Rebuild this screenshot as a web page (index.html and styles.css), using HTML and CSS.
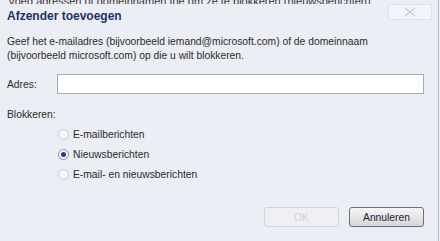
FILE: index.html
```html
<!DOCTYPE html>
<html lang="nl">
<head>
    <meta charset="UTF-8">
    <title>Afzender toevoegen</title>
    <link rel="stylesheet" href="styles.css">
</head>
<body>
    <div class="dialog">
        <div class="behind-text">Voeg adressen of domeinnamen toe om ze te blokkeren (nieuwsberichten)</div>
        <div class="title-bar">
            <div class="title">Afzender toevoegen</div>
            <div class="close-btn">
                <svg width="14" height="10" viewBox="0 0 14 10">
                    <path d="M2 1 L12 9 M12 1 L2 9" stroke="#c8cbe0" stroke-width="1.5" fill="none"/>
                </svg>
            </div>
        </div>

        <div class="content">
            <p class="intro">Geef het e-mailadres (bijvoorbeeld iemand@microsoft.com) of de domeinnaam (bijvoorbeeld microsoft.com) op die u wilt blokkeren.</p>

            <div class="field">
                <label class="field-label">Adres:</label>
                <div class="text-input"></div>
            </div>

            <div class="block-label">Blokkeren:</div>
            <div class="radio-list">
                <div class="radio-item">
                    <span class="radio"></span>
                    <span>E-mailberichten</span>
                </div>
                <div class="radio-item">
                    <span class="radio checked"></span>
                    <span>Nieuwsberichten</span>
                </div>
                <div class="radio-item">
                    <span class="radio"></span>
                    <span>E-mail- en nieuwsberichten</span>
                </div>
            </div>

            <div class="buttons">
                <div class="btn disabled">OK</div>
                <div class="btn">Annuleren</div>
            </div>
        </div>
    </div>
</body>
</html>
```

FILE: styles.css
```css
:root {
    --bg: #eceef6;
    --text: #2b2b2b;
    --title: #1c3466;
    --edge: #b9bdd6;
}

body {
    margin: 0;
    background: var(--bg);
    font-family: 'Liberation Sans', Arial, sans-serif;
    font-size: 10.3px;
    color: var(--text);
}

.dialog {
    width: 438px;
    height: 241px;
    border-right: 1px solid var(--edge);
    overflow: hidden;
    display: flex;
    flex-direction: column;
}

.behind-text {
    height: 4px;
    line-height: 2px;
    font-size: 11px;
    color: #333;
    white-space: nowrap;
    overflow: hidden;
    padding-left: 8px;
}

.title-bar {
    display: flex;
    justify-content: space-between;
    align-items: flex-start;
    padding: 0 6px 0 7px;
}

.title {
    font-weight: bold;
    font-size: 12px;
    color: var(--title);
    margin-top: 5px;
}

.close-btn {
    width: 42px;
    height: 14px;
    border: 1px solid #dfe1ee;
    border-radius: 2px;
    display: flex;
    justify-content: center;
    align-items: center;
    background: #f4f5fa;
}

.content {
    padding: 0 14px 0 7px;
}

.intro {
    margin: 12px 0 0;
    line-height: 14px;
    width: 390px;
}

.field {
    display: flex;
    align-items: center;
    margin-top: 11px;
}

.field-label {
    width: 50px;
}

.text-input {
    flex: 1;
    height: 18px;
    background: #fff;
    border: 1px solid #a7aab6;
}

.block-label {
    margin-top: 15px;
}

.radio-list {
    display: flex;
    flex-direction: column;
    gap: 6px;
    margin-top: 7px;
    padding-left: 51px;
}

.radio-item {
    display: flex;
    align-items: center;
    gap: 4px;
    height: 14px;
}

.radio {
    width: 11px;
    height: 11px;
    border-radius: 50%;
    border: 1px solid #c7cad6;
    background: #f6f7fb;
    box-sizing: border-box;
    position: relative;
}

.radio.checked {
    border-color: #8d93b5;
}

.radio.checked::after {
    content: '';
    position: absolute;
    top: 2px;
    left: 2px;
    width: 5px;
    height: 5px;
    border-radius: 50%;
    background: #2a3a9a;
}

.buttons {
    display: flex;
    justify-content: flex-end;
    gap: 10px;
    margin-top: 26px;
}

.btn {
    width: 73px;
    height: 18px;
    border: 1px solid #6d6f78;
    border-radius: 3px;
    background: linear-gradient(#f6f6f6, #d6d6d6);
    display: flex;
    justify-content: center;
    align-items: center;
    color: #1c1c3a;
}

.btn.disabled {
    border-color: #d2d4dc;
    background: #eef0f6;
    color: #d0d2dc;
}
```
